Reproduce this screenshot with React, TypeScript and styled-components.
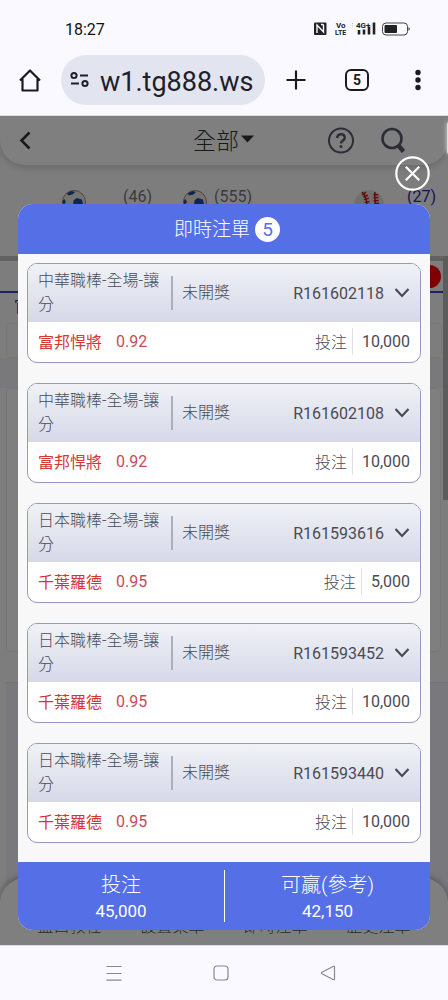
import React from "react";
import styled, { createGlobalStyle } from "styled-components";

const GlobalStyle = createGlobalStyle`
  *, *::before, *::after { box-sizing: border-box; }
  body {
    margin: 0;
    background: #faf9ff;
    font-family: Roboto, "Noto Sans CJK TC", sans-serif;
    font-weight: 300;
    color: #4a4b57;
  }
  :where(button) { font: inherit; color: inherit; border: 0; padding: 0; background: none; cursor: pointer; }
  :where(svg) { display: block; flex: none; overflow: visible; }
  :where(h1, h2, p, dl, dd, dt, ul) { margin: 0; padding: 0; font-weight: inherit; }
`;

const Screen = styled.div`
  display: flex;
  flex-direction: column;
  min-height: 100vh;
`;

/* Device status bar */
const StatusBar = styled.div`
  display: flex;
  align-items: center;
  justify-content: space-between;
  height: 48px;
  padding: 10px 37px 0 65px;
  color: #111;
  font-size: 16px;
  font-weight: 400;
`;

/* Browser toolbar */
const Toolbar = styled.div`
  display: flex;
  align-items: center;
  gap: 20px;
  height: 68px;
  padding: 0 19px 4px;
  color: #1b1b22;
  border-bottom: 1px solid #dcdce2;
`;

const AddressForm = styled.label`
  display: flex;
  flex: 1;
  align-items: center;
  gap: 10px;
  min-width: 0;
  height: 50px;
  padding: 0 9px;
  border-radius: 25px;
  background: #e2e5ef;
`;

const AddressInput = styled.input`
  flex: 1;
  min-width: 0;
  padding: 4px 0 0;
  border: 0;
  outline: 0;
  background: none;
  color: #1f2029;
  font-family: Roboto, sans-serif;
  font-size: 27px;
  font-weight: 400;
`;

const ToolbarActions = styled.div`
  display: flex;
  gap: 38px;
`;

const TabCount = styled.button`
  width: 24px;
  height: 22px;
  border: 2px solid #1b1b22;
  border-radius: 6px;
  font-size: 14px;
  font-weight: 700;
  line-height: 18px;
`;

/* The site and its overlay share one grid cell */
const PageView = styled.div`
  display: grid;
  flex: 1;
  overflow: hidden;
`;

const Site = styled.div`
  position: relative;
  grid-area: 1 / 1;
  display: flex;
  flex-direction: column;
  min-width: 0;
  background: #fbfbfc;
`;

const SiteHeader = styled.header`
  display: flex;
  align-items: center;
  height: 49px;
  padding: 0 42px 0 18px;
  border-radius: 0 0 25px 25px;
  background: #fff;
  box-shadow: 0 2px 10px #0003;
`;

const HeaderSide = styled.div`
  display: flex;
  gap: 26px;
`;

const LeagueButton = styled.button`
  display: flex;
  align-items: center;
  gap: 2px;
  margin: 0 auto;
  padding: 0 0 4px 87px;
  color: #333;
  font-size: 23px;
`;

const SportTabs = styled.nav`
  display: flex;
  align-items: flex-start;
  gap: 31px;
  height: 91px;
  padding: 21px 12px 0 62px;
`;

const SportTab = styled.button<{ $gap: number; $active?: boolean }>`
  display: flex;
  align-items: flex-start;
  gap: ${(p) => p.$gap}px;
  margin-left: ${(p) => (p.$active ? "auto" : "0")};
  color: ${(p) => (p.$active ? "#2a2ab0" : "#77777e")};
  font-size: 16px;
  font-weight: 400;
  line-height: 22px;
`;

const Ball = styled.svg`
  margin-top: 4px;
`;

const Notice = styled.div`
  display: flex;
  justify-content: flex-end;
  align-items: center;
  height: 37px;
  padding-right: 7px;
  border-top: 5px solid #c4c4c4;
  border-bottom: 2px solid #4343c0;
`;

const NoticeDot = styled.span`
  width: 23px;
  height: 23px;
  border-radius: 50%;
  background: #f00;
`;

const SubTab = styled.p`
  height: 30px;
  padding-left: 14px;
  color: #3333c0;
  font-size: 16px;
  font-weight: 400;
  line-height: 28px;
`;

const FilterBox = styled.div`
  height: 35px;
  margin: 0 6px;
  border: 1px solid #eeeef2;
  border-radius: 5px;
`;

const GroupBand = styled.div`
  height: 30px;
  background: #f2f2f7;
`;

const MatchPanel = styled.div`
  height: 264px;
  margin: 0 7px 0 6px;
  border: 1px solid #eeeeee;
  border-radius: 5px;
  background: #fff;
`;

const LowerPanel = styled.div`
  flex: 1;
  margin: 30px 0 -30px 6px;
  border-top: 1px solid #e8e8ee;
  background: #f0f0fb;
`;

const SiteNav = styled.nav`
  position: relative;
  display: grid;
  grid-template-columns: repeat(4, 1fr);
  align-items: end;
  height: 67px;
  padding: 0 18px 6px;
  border-radius: 25px 25px 0 0;
  background: #fff;
  box-shadow: 0 -1px 7px #0005;
`;

const SiteNavItem = styled.button`
  color: #555;
  font-size: 16px;
  line-height: 24px;
`;

const ScrollThumb = styled.span`
  position: absolute;
  top: 140px;
  right: 0;
  width: 5px;
  height: 244px;
  background: #b8b8b8;
`;

/* Bet slip dialog */
const Overlay = styled.div`
  position: relative;
  grid-area: 1 / 1;
  display: flex;
  flex-direction: column;
  align-items: stretch;
  padding: 40px 18px 15px;
  background: rgba(0, 0, 0, 0.5);
`;

const EdgeHandle = styled.span`
  position: absolute;
  top: 6px;
  right: -4px;
  width: 5px;
  height: 32px;
  border-radius: 4px;
  background: #ddd;
  box-shadow: 0 0 4px #ddd;
`;

const CloseButton = styled.button`
  align-self: flex-end;
  margin-bottom: 13px;
`;

const Dialog = styled.section`
  overflow: hidden;
  border-radius: 15px;
  background: #f8f8f9;
`;

const DialogHeader = styled.header`
  display: flex;
  align-items: center;
  justify-content: center;
  gap: 5px;
  height: 50px;
  padding-left: 6px;
  background: #556fe6;
  color: #fff;
`;

const DialogTitle = styled.h1`
  padding-top: 2px;
  font-size: 19px;
  line-height: 24px;
`;

const Count = styled.span`
  width: 25px;
  height: 25px;
  border-radius: 50%;
  background: #fff;
  color: #556fe6;
  font-size: 19px;
  font-weight: 400;
  line-height: 26px;
  text-align: center;
`;

const SlipList = styled.ul`
  display: flex;
  flex-direction: column;
  gap: 20px;
  padding: 9px 9px 19px;
  list-style: none;
`;

const Slip = styled.li`
  height: 100px;
  overflow: hidden;
  border: 1px solid #9898bc;
  border-radius: 10px;
  background: #fff;
  font-size: 16px;
`;

const SlipHead = styled.div`
  display: flex;
  align-items: center;
  height: 58px;
  padding: 0 10px;
  background: linear-gradient(#f0f2f7, #d6d8e7);
`;

const SlipGame = styled.h2`
  width: 133px;
  padding-right: 8px;
  font-size: 16px;
  line-height: 24px;
`;

const SlipState = styled.p`
  flex: 1;
  padding: 5px 0 5px 9px;
  border-left: 2px solid #adaebb;
  line-height: 24px;
`;

const SlipNumber = styled.span`
  margin-right: 10px;
  font-weight: 400;
`;

const SlipBody = styled.div`
  display: flex;
  align-items: center;
  height: 38px;
  padding: 0 10px;
`;

const Team = styled.span`
  color: #d63636;
  font-weight: 400;
`;

const Odds = styled.span`
  flex: 1;
  padding-left: 14px;
  color: #c84a58;
  font-weight: 400;
`;

const Stake = styled.span`
  margin-left: 5px;
  padding-left: 9px;
  border-left: 1px solid #e0e0ea;
  font-weight: 400;
  line-height: 27px;
`;

const Totals = styled.dl`
  display: grid;
  grid-template-columns: 1fr 1fr;
  padding: 8px 0;
  background: #556fe6;
  color: #fff;
  text-align: center;
`;

const Total = styled.div`
  height: 52px;
  padding-top: 2px;

  & + & { border-left: 1px solid #fff; }
  dt { font-size: 20px; line-height: 26px; }
  dd { font-size: 17px; font-weight: 400; line-height: 26px; }
`;

/* Device navigation bar */
const SystemNav = styled.nav`
  display: flex;
  align-items: center;
  justify-content: center;
  gap: 91px;
  height: 55px;
  padding-right: 7px;
  border-top: 1px solid #dcdce2;
`;

const StatusIcons = () => (
  <svg width="98" height="18" viewBox="0 0 98 18" role="img" aria-label="NFC, VoLTE, 4G+, battery">
    <rect x="1" y="2.500" width="12.500" height="12.500" rx="1" fill="#222" />
    <path d="M4 13V5L10.500 12V5.500Q10.500 4.500 9.500 4.500H8" fill="none" stroke="#faf9ff" strokeWidth="1.400" />
    <g fill="#222" fontFamily="Roboto, sans-serif" fontWeight="700">
      <text x="23" y="8" fontSize="8">Vo</text>
      <text x="22" y="15" fontSize="7">LTE</text>
      <text x="43" y="8" fontSize="8">4G+</text>
    </g>
    <path d="M46 10v4.500M51 9.500v5M56 6.500v8M61 2.500v12" stroke="#222" strokeWidth="2.600" />
    <path d="M39.500 3v1M39.500 5.500v1" stroke="#bbb" />
    <rect x="69.500" y="3" width="25" height="12" rx="3.500" fill="none" stroke="#444" />
    <rect x="71.500" y="5" width="12.500" height="8" rx="1" fill="#222" />
    <path d="M95.500 7q2.500 2 0 4z" fill="#333" />
  </svg>
);

const SoccerBall = () => (
  <Ball width="24" height="24" viewBox="0 0 24 24">
    <circle cx="12" cy="12" r="11.500" fill="#eee6e6" stroke="#b87b74" />
    <path d="M5 3.500Q7 1.500 9.500 1L13 2 10.500 4.500 6 5.500zM11.500 10.500l3-2.500 5.500 1.500 1 5-5 4-5-2zM0.500 11L2.500 9 4 12 1.500 15z" fill="#1c4f9e" />
  </Ball>
);

const Baseball = () => (
  <Ball width="30" height="30" viewBox="0 0 30 30">
    <circle cx="15" cy="15" r="15" fill="#e6dedb" />
    <path d="M8 2q6 5 5.500 25M21 2q-1 9 3 22" fill="none" stroke="#d01414" strokeWidth="1.500" />
    <path d="M9.500 3q5 6 4.500 24M22 4q-.500 9 3 20" fill="none" stroke="#d01414" strokeWidth="5" strokeDasharray="1.500 1.500" />
  </Ball>
);

const slips = [
  { game: "中華職棒-全場-讓分", number: "R161602118", team: "富邦悍將", odds: "0.92", stake: "10,000" },
  { game: "中華職棒-全場-讓分", number: "R161602108", team: "富邦悍將", odds: "0.92", stake: "10,000" },
  { game: "日本職棒-全場-讓分", number: "R161593616", team: "千葉羅德", odds: "0.95", stake: "5,000" },
  { game: "日本職棒-全場-讓分", number: "R161593452", team: "千葉羅德", odds: "0.95", stake: "10,000" },
  { game: "日本職棒-全場-讓分", number: "R161593440", team: "千葉羅德", odds: "0.95", stake: "10,000" },
];

export default function App() {
  return (
    <Screen>
      <GlobalStyle />
      <StatusBar>
        <span>18:27</span>
        <StatusIcons />
      </StatusBar>
      <Toolbar>
        <button aria-label="Home">
          <svg width="22" height="24" viewBox="0 0 22 24" fill="none" stroke="currentColor" strokeWidth="2.200">
            <path d="M1 12.500L11 2.500l10 10M3.500 11v11.500h15V11" strokeLinejoin="round" />
          </svg>
        </button>
        <AddressForm>
          <svg width="20" height="18" viewBox="0 0 20 18" fill="none" stroke="#1f2029" strokeWidth="2">
            <circle cx="4" cy="4.500" r="2.600" />
            <path d="M10 4.500h8M1 12.500h8" />
            <circle cx="15" cy="12.500" r="2.600" />
          </svg>
          <AddressInput aria-label="Address" defaultValue="w1.tg888.ws" />
        </AddressForm>
        <ToolbarActions>
          <button aria-label="New tab">
            <svg width="22" height="22" viewBox="0 0 22 22" stroke="currentColor" strokeWidth="2.200">
              <path d="M11 1.500v19M1.500 11h19" />
            </svg>
          </button>
          <TabCount aria-label="5 tabs">5</TabCount>
          <button aria-label="Menu">
            <svg width="22" height="22" viewBox="0 0 22 22" fill="currentColor">
              <circle cx="11" cy="3.500" r="2.700" />
              <circle cx="11" cy="11" r="2.700" />
              <circle cx="11" cy="18.500" r="2.700" />
            </svg>
          </button>
        </ToolbarActions>
      </Toolbar>

      <PageView>
        <Site>
          <SiteHeader>
            <HeaderSide>
              <button aria-label="Back">
                <svg width="14" height="20" viewBox="0 0 14 20" fill="none" stroke="#333" strokeWidth="2.600">
                  <path d="M11.500 1.500L3.500 9.500l8 8" />
                </svg>
              </button>
            </HeaderSide>
            <LeagueButton>
              全部
              <svg width="13" height="8" viewBox="0 0 13 8" fill="#333"><path d="M0 0.500h13L6.500 7.500z" /></svg>
            </LeagueButton>
            <HeaderSide>
              <button aria-label="Help">
                <svg width="26" height="26" viewBox="0 0 26 26" fill="none" stroke="#5a5a70" strokeWidth="2">
                  <circle cx="13" cy="12.500" r="12" />
                  <path d="M9.200 10c0-5 7.600-5 7.600-.5 0 3-3.800 3-3.800 6" strokeWidth="2.400" />
                  <circle cx="13" cy="18.500" r="1.500" fill="#5a5a70" stroke="none" />
                </svg>
              </button>
              <button aria-label="Search">
                <svg width="26" height="26" viewBox="0 0 26 26" fill="none" stroke="#5a5a70">
                  <circle cx="12" cy="10.500" r="9.500" strokeWidth="2.600" />
                  <path d="M18 17l5.500 6.500" strokeWidth="4.500" />
                </svg>
              </button>
            </HeaderSide>
          </SiteHeader>
          <SportTabs>
            <SportTab $gap={37}><SoccerBall />(46)</SportTab>
            <SportTab $gap={7}><SoccerBall />(555)</SportTab>
            <SportTab $gap={23} $active><Baseball />(27)</SportTab>
          </SportTabs>
          <Notice><NoticeDot /></Notice>
          <SubTab>官</SubTab>
          <FilterBox />
          <GroupBand />
          <MatchPanel />
          <LowerPanel />
          <SiteNav>
            <SiteNavItem>盤口教程</SiteNavItem>
            <SiteNavItem>設置菜單</SiteNavItem>
            <SiteNavItem>即時注單</SiteNavItem>
            <SiteNavItem>歷史注單</SiteNavItem>
          </SiteNav>
          <ScrollThumb />
        </Site>

        <Overlay>
          <EdgeHandle />
          <CloseButton aria-label="Close">
            <svg width="35" height="35" viewBox="0 0 35 35" fill="none" stroke="#fff" strokeWidth="2.200">
              <circle cx="17.500" cy="17.500" r="16.200" />
              <path d="M10.800 10.800l13.400 13.400M24.200 10.800L10.800 24.200" />
            </svg>
          </CloseButton>
          <Dialog role="dialog" aria-labelledby="slip-title">
            <DialogHeader>
              <DialogTitle id="slip-title">即時注單</DialogTitle>
              <Count>5</Count>
            </DialogHeader>
            <SlipList>
              {slips.map((slip) => (
                <Slip key={slip.number}>
                  <SlipHead>
                    <SlipGame>{slip.game}</SlipGame>
                    <SlipState>未開獎</SlipState>
                    <SlipNumber>{slip.number}</SlipNumber>
                    <button aria-label={`Expand ${slip.number}`}>
                      <svg width="16" height="12" viewBox="0 0 16 12" fill="none" stroke="#4a4b57" strokeWidth="2.200">
                        <path d="M1.500 2L8 9l6.500-7" />
                      </svg>
                    </button>
                  </SlipHead>
                  <SlipBody>
                    <Team>{slip.team}</Team>
                    <Odds>{slip.odds}</Odds>
                    <span>投注</span>
                    <Stake>{slip.stake}</Stake>
                  </SlipBody>
                </Slip>
              ))}
            </SlipList>
            <Totals>
              <Total><dt>投注</dt><dd>45,000</dd></Total>
              <Total><dt>可贏(參考)</dt><dd>42,150</dd></Total>
            </Totals>
          </Dialog>
        </Overlay>
      </PageView>

      <SystemNav>
        <button aria-label="Recent apps">
          <svg width="16" height="16" viewBox="0 0 16 16" stroke="#88888e" strokeWidth="1.200"><path d="M0.500 1.500h15M0.500 8.500h15M0.500 15.200h15" /></svg>
        </button>
        <button aria-label="Home screen">
          <svg width="16" height="16" viewBox="0 0 16 16" fill="none" stroke="#88888e" strokeWidth="1.200"><rect x="1" y="1" width="14" height="14" rx="3" /></svg>
        </button>
        <button aria-label="Go back">
          <svg width="16" height="16" viewBox="0 0 16 16" fill="none" stroke="#88888e" strokeWidth="1.200"><path d="M14.500 2v12q0 1-1 .7L2 8.700q-1-.7 0-1.400L13.500 1.300q1-.3 1 .7z" /></svg>
        </button>
      </SystemNav>
    </Screen>
  );
}
